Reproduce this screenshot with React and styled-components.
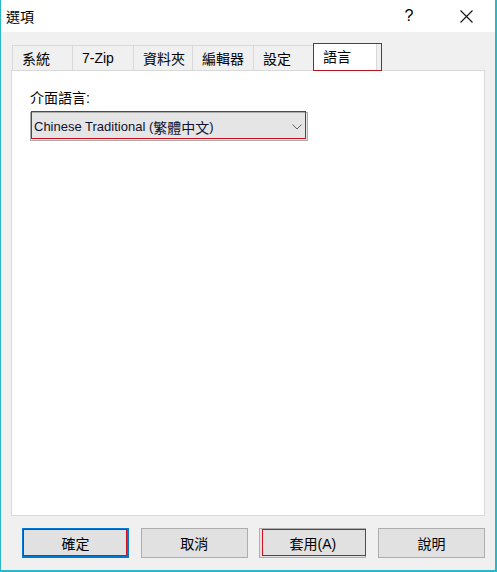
import React from "react";
import styled, { createGlobalStyle } from "styled-components";

const GlobalStyle = createGlobalStyle`
  html, body { margin: 0; padding: 0; background: #ffffff; }
  body {
    font-family: "Liberation Sans", "Noto Sans CJK TC", sans-serif;
    font-size: 14px;
    color: #000;
  }
`;

const Window = styled.div`
  width: 497px;
  height: 572px;
  box-sizing: border-box;
  border-left: 1px solid #2ab7c6;
  border-right: 2px solid #2ab7c6;
  border-bottom: 2px solid #2ab7c6;
  display: flex;
  flex-direction: column;
  background: #f0f0f0;
`;

const TitleBar = styled.div`
  height: 32px;
  flex: none;
  background: #ffffff;
  display: flex;
  align-items: center;
  padding-left: 5px;
`;

const Title = styled.span`
  font-size: 14px;
  font-family: "Noto Sans CJK TC", sans-serif;
`;

const Caption = styled.div`
  margin-left: auto;
  display: flex;
  gap: 11px;
  padding-right: 6px;
  height: 100%;
`;

const CaptionButton = styled.div`
  width: 46px;
  height: 100%;
  display: flex;
  align-items: center;
  justify-content: center;
  font-size: 16px;
  font-family: "Liberation Sans", sans-serif;
`;

const Body = styled.div`
  flex: 1;
  display: flex;
  flex-direction: column;
  padding: 11px 10px 12px 10px;
  min-height: 0;
`;

const TabStrip = styled.div`
  height: 28px;
  flex: none;
  display: flex;
  align-items: flex-end;
  padding-left: 1px;
  margin-bottom: -1px;
  position: relative;
  z-index: 1;
`;

const Tab = styled.div`
  position: relative;
  box-sizing: border-box;
  width: ${(p) => p.$w}px;
  height: ${(p) => (p.$active ? 28 : 25)}px;
  margin-bottom: ${(p) => (p.$active ? 0 : 1)}px;
  border-top: 1px solid #d9d9d9;
  border-left: 1px solid #d9d9d9;
  border-right: ${(p) => (p.$active ? "1px solid #d9d9d9" : "none")};
  background: ${(p) => (p.$active ? "#ffffff" : "#f0f0f0")};
  padding-left: 9px;
  padding-bottom: ${(p) => (p.$active ? 3 : 0)}px;
  display: flex;
  align-items: center;
  font-size: 14px;
  white-space: nowrap;

  ${(p) =>
    p.$active &&
    `
    &::after {
      content: "";
      position: absolute;
      left: -1px;
      top: -1px;
      width: 69px;
      height: 28px;
      box-sizing: border-box;
      border: 1px solid #b5141f;
    }
  `}
`;

const Panel = styled.div`
  flex: 1;
  background: #ffffff;
  border: 1px solid #d9d9d9;
  display: flex;
  flex-direction: column;
  align-items: flex-start;
  padding: 17px 0 0 18px;
`;

const Label = styled.div`
  line-height: 20px;
  font-size: 14px;
`;

const Select = styled.div`
  margin-top: 4px;
  width: 278px;
  height: 29px;
  box-sizing: border-box;
  border: 1px solid #acacac;
  background: #e5e5e5;
  display: flex;
  align-items: center;
  padding-left: 3px;
  position: relative;
  font-size: 13px;
  color: #101030;

  &::after {
    content: "";
    position: absolute;
    left: 0;
    top: -2px;
    width: 275px;
    height: 28px;
    box-sizing: border-box;
    border: 1px solid #c8101e;
  }
`;

const Cjk = styled.span`
  font-size: 14px;
  font-family: "Noto Sans CJK TC", sans-serif;
`;

const Chevron = styled.svg`
  margin-left: auto;
  margin-right: 5px;
  display: block;
`;

const ButtonRow = styled.div`
  flex: none;
  margin-top: 12px;
  display: flex;
  gap: 11.7px;
  padding-left: 11px;
`;

const Button = styled.div`
  position: relative;
  width: 107px;
  height: 30px;
  box-sizing: border-box;
  border: ${(p) => (p.$default ? "2px solid #0078d7" : "1px solid #adadad")};
  background: #e1e1e1;
  display: flex;
  align-items: center;
  justify-content: center;
  font-size: 14px;
`;

const FocusRing = styled.span`
  position: absolute;
  left: ${(p) => p.$l}px;
  top: ${(p) => p.$t}px;
  width: 104px;
  height: 27px;
  box-sizing: border-box;
  border: 1px solid #d0101a;
  pointer-events: none;
`;

const tabs = [
  { label: "系統", w: 60 },
  { label: "7-Zip", w: 61 },
  { label: "資料夾", w: 59 },
  { label: "編輯器", w: 61 },
  { label: "設定", w: 60 },
  { label: "語言", w: 64, active: true },
];

export default function App() {
  return (
    <>
      <GlobalStyle />
      <Window>
        <TitleBar>
          <Title>選項</Title>
          <Caption>
            <CaptionButton>?</CaptionButton>
            <CaptionButton>
              <svg width="13" height="13" viewBox="0 0 13 13">
                <path d="M0.5 0.5 L12.5 12.5 M12.5 0.5 L0.5 12.5" stroke="#111" strokeWidth="1.1" fill="none" />
              </svg>
            </CaptionButton>
          </Caption>
        </TitleBar>
        <Body>
          <TabStrip>
            {tabs.map((t) => (
              <Tab key={t.label} $w={t.w} $active={t.active}>
                {t.label}
              </Tab>
            ))}
          </TabStrip>
          <Panel>
            <Label>介面語言:</Label>
            <Select>
              Chinese Traditional (<Cjk>繁體中文</Cjk>)
              <Chevron width="10" height="6" viewBox="0 0 10 6">
                <polyline points="0.5,0.5 5,5 9.5,0.5" stroke="#606060" strokeWidth="1" fill="none" />
              </Chevron>
            </Select>
          </Panel>
          <ButtonRow>
            <Button $default>
              確定
              <FocusRing $l={-1} $t={-1} />
            </Button>
            <Button>取消</Button>
            <Button>
              套用(A)
              <FocusRing $l={2} $t={0} />
            </Button>
            <Button>說明</Button>
          </ButtonRow>
        </Body>
      </Window>
    </>
  );
}
